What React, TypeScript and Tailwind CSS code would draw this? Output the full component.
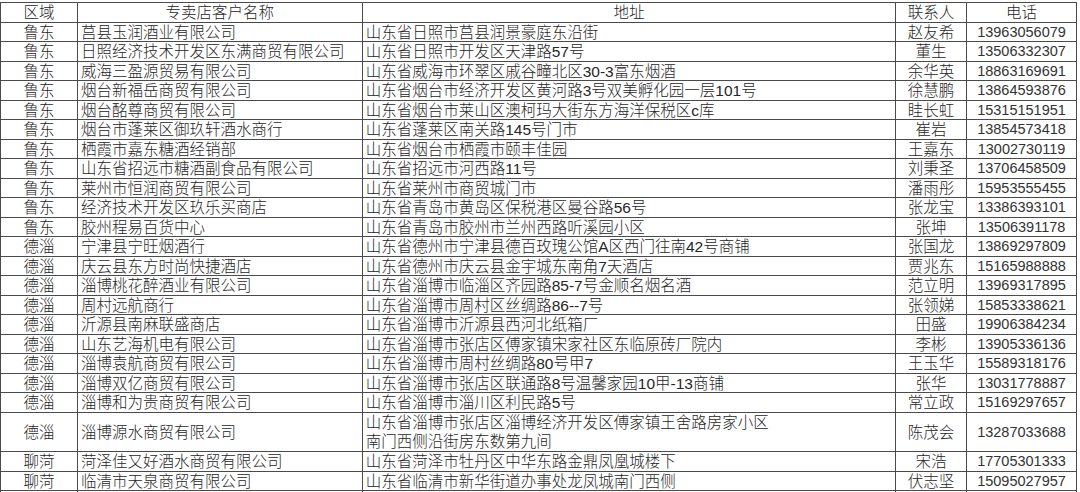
import React from "react";

type Row = { area: string; name: string; addr: string[]; contact: string; phone: string };

const rows: Row[] = [
  { area: "鲁东", name: "莒县玉润酒业有限公司", addr: ["山东省日照市莒县润景豪庭东沿街"], contact: "赵友希", phone: "13963056079" },
  { area: "鲁东", name: "日照经济技术开发区东满商贸有限公司", addr: ["山东省日照市开发区天津路57号"], contact: "董生", phone: "13506332307" },
  { area: "鲁东", name: "威海三盈源贸易有限公司", addr: ["山东省威海市环翠区戚谷疃北区30-3富东烟酒"], contact: "余华英", phone: "18863169691" },
  { area: "鲁东", name: "烟台新福岳商贸有限公司", addr: ["山东省烟台市经济开发区黄河路3号双美孵化园一层101号"], contact: "徐慧鹏", phone: "13864593876" },
  { area: "鲁东", name: "烟台酩尊商贸有限公司", addr: ["山东省烟台市莱山区澳柯玛大街东方海洋保税区c库"], contact: "眭长虹", phone: "15315151951" },
  { area: "鲁东", name: "烟台市蓬莱区御玖轩酒水商行", addr: ["山东省蓬莱区南关路145号门市"], contact: "崔岩", phone: "13854573418" },
  { area: "鲁东", name: "栖霞市嘉东糖酒经销部", addr: ["山东省烟台市栖霞市颐丰佳园"], contact: "王嘉东", phone: "13002730119" },
  { area: "鲁东", name: "山东省招远市糖酒副食品有限公司", addr: ["山东省招远市河西路11号"], contact: "刘秉圣", phone: "13706458509" },
  { area: "鲁东", name: "莱州市恒润商贸有限公司", addr: ["山东省莱州市商贸城门市"], contact: "潘雨彤", phone: "15953555455" },
  { area: "鲁东", name: "经济技术开发区玖乐买商店", addr: ["山东省青岛市黄岛区保税港区曼谷路56号"], contact: "张龙宝", phone: "13386393101" },
  { area: "鲁东", name: "胶州程易百货中心", addr: ["山东省青岛市胶州市兰州西路听溪园小区"], contact: "张坤", phone: "13506391178" },
  { area: "德淄", name: "宁津县宁旺烟酒行", addr: ["山东省德州市宁津县德百玫瑰公馆A区西门往南42号商铺"], contact: "张国龙", phone: "13869297809" },
  { area: "德淄", name: "庆云县东方时尚快捷酒店", addr: ["山东省德州市庆云县金宇城东南角7天酒店"], contact: "贾兆东", phone: "15165988888" },
  { area: "德淄", name: "淄博桃花醉酒业有限公司", addr: ["山东省淄博市临淄区齐园路85-7号金顺名烟名酒"], contact: "范立明", phone: "13969317895" },
  { area: "德淄", name: "周村远航商行", addr: ["山东省淄博市周村区丝绸路86--7号"], contact: "张领娣", phone: "15853338621" },
  { area: "德淄", name: "沂源县南麻联盛商店", addr: ["山东省淄博市沂源县西河北纸箱厂"], contact: "田盛", phone: "19906384234" },
  { area: "德淄", name: "山东艺海机电有限公司", addr: ["山东省淄博市张店区傅家镇宋家社区东临原砖厂院内"], contact: "李彬", phone: "13905336136" },
  { area: "德淄", name: "淄博袁航商贸有限公司", addr: ["山东省淄博市周村丝绸路80号甲7"], contact: "王玉华", phone: "15589318176" },
  { area: "德淄", name: "淄博双亿商贸有限公司", addr: ["山东省淄博市张店区联通路8号温馨家园10甲-13商铺"], contact: "张华", phone: "13031778887" },
  { area: "德淄", name: "淄博和为贵商贸有限公司", addr: ["山东省淄博市淄川区利民路5号"], contact: "常立政", phone: "15169297657" },
  { area: "德淄", name: "淄博源水商贸有限公司", addr: ["山东省淄博市张店区淄博经济开发区傅家镇王舍路房家小区", "南门西侧沿街房东数第九间"], contact: "陈茂会", phone: "13287033688" },
  { area: "聊菏", name: "菏泽佳又好酒水商贸有限公司", addr: ["山东省菏泽市牡丹区中华东路金鼎凤凰城楼下"], contact: "宋浩", phone: "17705301333" },
  { area: "聊菏", name: "临清市天泉商贸有限公司", addr: ["山东省临清市新华街道办事处龙凤城南门西侧"], contact: "伏志坚", phone: "15095027957" },
];

const cell = "h-full border-r border-[#4a4a4a] flex items-center overflow-hidden whitespace-nowrap pt-px";

export default function App() {
  return (
    <div
      className="w-[1080px] h-[492px] overflow-hidden bg-white text-[#262626] pt-[2px]"
      style={{ fontFamily: '"Liberation Sans", "Noto Sans CJK SC", sans-serif' }}
    >
      <div className="w-[1077px] border-l border-t border-[#4a4a4a] text-[15.5px] leading-[19px] font-light">
        <div className="flex h-[19.5px] border-b border-[#4a4a4a]">
          <div className={`${cell} w-[77px] justify-center`}>区域</div>
          <div className={`${cell} w-[285px] justify-center`}>专卖店客户名称</div>
          <div className={`${cell} w-[534px] justify-center`}>地址</div>
          <div className={`${cell} w-[71px] justify-center`}>联系人</div>
          <div className={`${cell} w-[110px] justify-center`}>电话</div>
        </div>
        {rows.map((r, i) => (
          <div
            key={i}
            className={`flex border-b border-[#4a4a4a] ${r.addr.length > 1 ? "h-[39.5px]" : "h-[19.5px]"}`}
          >
            <div className={`${cell} w-[77px] justify-center`}>{r.area}</div>
            <div className={`${cell} w-[285px] pl-[3px]`}>{r.name}</div>
            <div className={`${cell} w-[534px] pl-[3px]`}>
              <div className="flex flex-col">
                {r.addr.map((a, j) => (
                  <span key={j} className="leading-[19.5px]">{a}</span>
                ))}
              </div>
            </div>
            <div className={`${cell} w-[71px] justify-center`}>{r.contact}</div>
            <div className={`${cell} w-[110px] justify-center text-[14.5px] text-[#333]`}>{r.phone}</div>
          </div>
        ))}
        <div className="flex h-[19.5px]">
          <div className={`${cell} w-[77px]`} />
          <div className={`${cell} w-[285px]`} />
          <div className={`${cell} w-[534px]`} />
          <div className={`${cell} w-[71px]`} />
          <div className={`${cell} w-[110px]`} />
        </div>
      </div>
    </div>
  );
}
